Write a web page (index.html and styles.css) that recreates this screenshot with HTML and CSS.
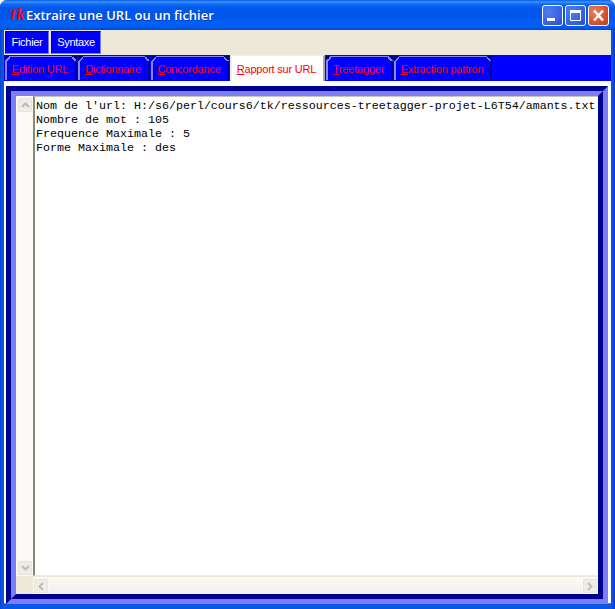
FILE: index.html
```html
<!DOCTYPE html>
<html lang="fr">
<head>
<meta charset="utf-8">
<title>Extraire une URL ou un fichier</title>
<link rel="stylesheet" href="styles.css">
</head>
<body>
<div class="window">
  <header class="titlebar">
    <span class="tk">Tk</span>
    <span class="title">Extraire une URL ou un fichier</span>
    <div class="controls">
      <div class="ctl"><svg width="19" height="19" viewBox="0 0 19 19"><rect x="4" y="12" width="8" height="3" fill="#fff"/></svg></div>
      <div class="ctl"><svg width="19" height="19" viewBox="0 0 19 19"><path d="M4.500 4.500h10v10h-10z" fill="none" stroke="#fff" stroke-width="1"/><rect x="4" y="4" width="11" height="3" fill="#fff"/></svg></div>
      <div class="ctl close"><svg width="19" height="19" viewBox="0 0 19 19"><path d="M5 4.500l9 10M14 4.500l-9 10" stroke="#fff" stroke-width="2.600" fill="none"/></svg></div>
    </div>
  </header>
  <nav class="menubar">
    <div class="menu">Fichier</div>
    <div class="menu">Syntaxe</div>
  </nav>
  <div class="tabs">
    <div class="tab t1"><u>E</u>dition URL</div>
    <div class="tab t2"><u>D</u>ictionnaire</div>
    <div class="tab t3"><u>C</u>oncordance</div>
    <div class="tab active"><u>R</u>apport sur URL</div>
    <div class="tab t5"><u>T</u>reetagger</div>
    <div class="tab t6"><u>E</u>xtraction pattron</div>
  </div>
  <main class="panel">
    <div class="groove">
      <div class="groove-in">
        <div class="vbar">
          <div class="arrow"><svg width="9" height="6" viewBox="0 0 9 6"><path d="M1 5l3.500-3.500L8 5" fill="none" stroke="#bdbdb2" stroke-width="2"/></svg></div>
          <div class="arrow"><svg width="9" height="6" viewBox="0 0 9 6"><path d="M1 1l3.500 3.500L8 1" fill="none" stroke="#bdbdb2" stroke-width="2"/></svg></div>
        </div>
        <pre class="text">Nom de l'url: H:/s6/perl/cours6/tk/ressources-treetagger-projet-L6T54/amants.txt
Nombre de mot : 105
Frequence Maximale : 5
Forme Maximale : des</pre>
        <div class="corner"></div>
        <div class="hbar">
          <div class="arrow"><svg width="6" height="9" viewBox="0 0 6 9"><path d="M5 1L1.500 4.500 5 8" fill="none" stroke="#bdbdb2" stroke-width="2"/></svg></div>
          <div class="arrow"><svg width="6" height="9" viewBox="0 0 6 9"><path d="M1 1l3.500 3.500L1 8" fill="none" stroke="#bdbdb2" stroke-width="2"/></svg></div>
        </div>
      </div>
    </div>
  </main>
</div>
</body>
</html>
```
FILE: styles.css
```css
* { box-sizing: border-box; }
html, body { margin: 0; padding: 0; background: #fff; }
.window {
  width: 615px;
  height: 609px;
  display: flex;
  flex-direction: column;
  padding: 0 4px 5px;
  background: linear-gradient(90deg, #0a3fd8 0, #0855dd 2px, #0857e6 4px, #0857e6 611px, #0a4fd8 613px, #0831d9 615px);
  border-radius: 7px 7px 0 0;
  overflow: hidden;
}
.titlebar {
  flex: 0 0 30px;
  margin: 0 -4px;
  padding: 0 6px 0 8px;
  display: flex;
  align-items: center;
  background: linear-gradient(180deg, #0a5ae8 0, #3c95fb 2px, #0f6bf5 4px, #0058ee 8px, #0055ea 16px, #0062f7 24px, #0058ee 28px, #0040d0 30px);
}
.tk {
  flex: 0 0 18px;
  font: italic bold 16px/1 "Liberation Serif", serif;
  letter-spacing: -1px;
  color: #f00;
}
.title {
  font: 600 13px/1 "Open Sans", sans-serif;
  color: #fff;
  flex: 1;
  text-shadow: 1px 1px 0 #0f3fb0;
}
.controls { display: flex; gap: 2px; }
.ctl {
  width: 21px;
  height: 21px;
  border: 1px solid #fff;
  border-radius: 3px;
  background: radial-gradient(circle at 30% 30%, #4d80ee 0, #3a62e0 60%, #2b48c8 100%);
}
.ctl svg { display: block; }
.close { background: radial-gradient(circle at 30% 30%, #e8805c 0, #d9502c 60%, #c03a1c 100%); }
.menubar {
  flex: 0 0 25px;
  display: flex;
  gap: 2px;
  padding: 1px 0 1px 1px;
  background: #ece9d8;
}
.menu {
  height: 23px;
  padding: 0 5px;
  background: #00f;
  color: #fff;
  border: 1px solid #00a;
  border-right-color: #7a7af0;
  border-bottom-color: #7a7af0;
  font: 11px/21px "Liberation Sans", sans-serif;
  letter-spacing: -0.3px;
  text-align: center;
}
.menu:first-child { width: 44px; }
.menu:nth-child(2) { width: 50px; }
.tabs {
  flex: 0 0 25px;
  display: flex;
  gap: 1px;
  padding: 1px 0 0 1px;
  background: #00f;
  position: relative;
  z-index: 1;
}
.tab {
  position: relative;
  height: 24px;
  padding-right: 2px;
  text-align: center;
  color: #f00;
  font: 11px/24px "Liberation Sans", sans-serif;
  letter-spacing: -0.2px;
  border-top: 1px solid #8585f5;
  border-left: 2px solid #8585f5;
  border-right: 2px solid #000090;
  background: #00f;
}
.tab::before, .tab::after {
  content: "";
  position: absolute;
  top: -1px;
  width: 5px;
  height: 5px;
}
.tab::before { left: -2px; background: linear-gradient(135deg, #000090 50%, #8585f5 50%, #8585f5 75%, transparent 75%); }
.tab::after { right: -2px; background: linear-gradient(225deg, #000090 50%, #8585f5 50%, #8585f5 75%, transparent 75%); }
.t1 { width: 72px; }
.t2 { width: 72px; }
.t3 { width: 78px; }
.t5 { width: 67px; }
.t6 { width: 98px; }
.active {
  width: 95px;
  height: 26px;
  margin-top: -1px;
  background: #fff;
  border-top: 1px solid #eee;
  border-left: 2px solid #eee;
  border-right: 2px solid #a8a8a8;
  line-height: 26px;
}
.active::before, .active::after { display: none; }
.panel {
  flex: 1;
  min-height: 0;
  padding: 5px 3px 0 2px;
  background: #fff;
  border-bottom: 1px solid #808078;
}
.groove {
  height: 518px;
  border: 5px solid;
  border-color: #000090 #7d7df5 #7d7df5 #000090;
}
.groove-in {
  height: 100%;
  border: 5px solid;
  border-color: #7d7df5 #000090 #000090 #7d7df5;
  display: grid;
  grid-template-columns: 17px 1fr;
  grid-template-rows: 1fr 18px;
  background: #fff;
}
.vbar {
  background: #fbfaf6;
  display: flex;
  flex-direction: column;
  justify-content: space-between;
  padding: 1px 1px 0;
}
.hbar {
  background: linear-gradient(180deg, #fafaf5, #f2f0ea);
  border-top: 1px solid #ece9d8;
  display: flex;
  justify-content: space-between;
  padding: 1px 0 0;
}
.corner { background: #ece9d8; }
.arrow {
  width: 16px;
  height: 16px;
  background: #eeede5;
  border: 1px solid #f8f8f4;
  border-radius: 2px;
  box-shadow: 0 0 0 1px #e8e6da inset;
  display: flex;
  align-items: center;
  justify-content: center;
}
.text {
  margin: 0;
  padding: 2px 0 0 1px;
  overflow: hidden;
  font: 11.670px/14px "Liberation Mono", monospace;
  color: #000;
  background: #fff;
  border-left: 2px solid #8b8878;
  border-top: 1px solid #c8c6b8;
  border-bottom: 1px solid #f0eee4;
}
```
